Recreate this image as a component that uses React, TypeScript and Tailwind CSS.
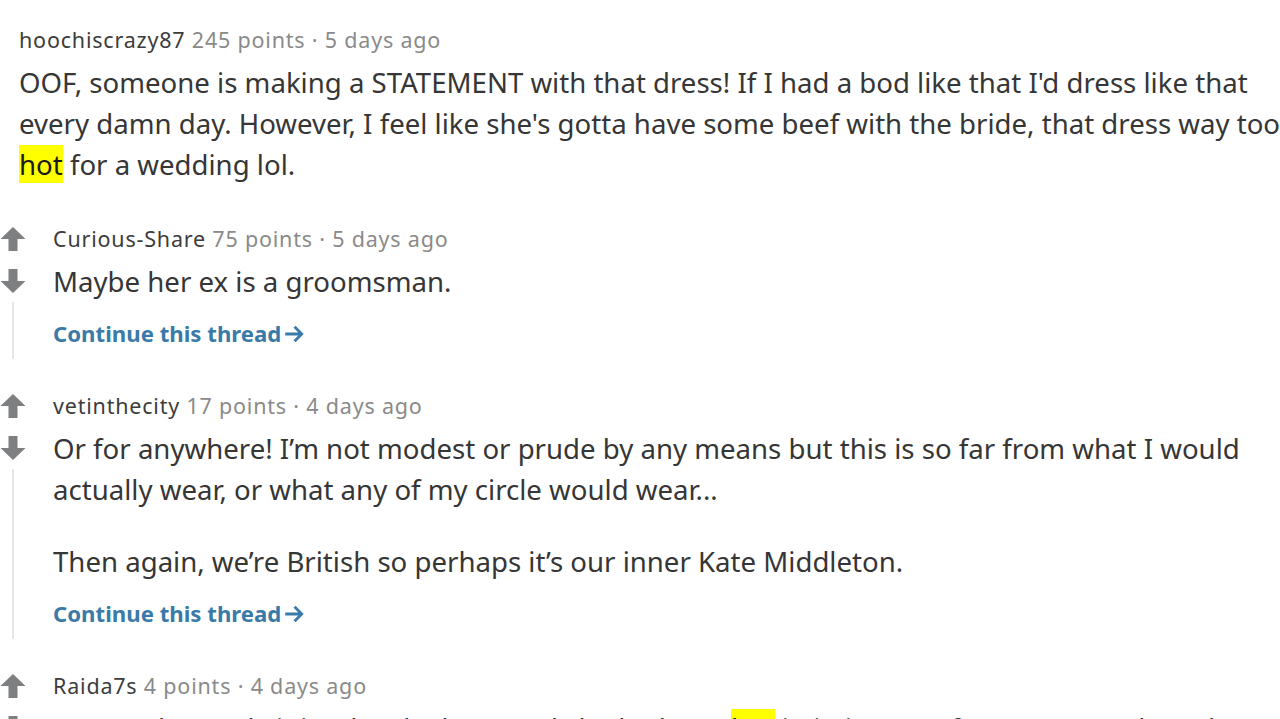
import type { ReactNode } from "react";

type Reply = {
  author: string;
  points: string;
  age: string;
  paragraphs: ReactNode[][];
  more?: boolean;
};

const body = "font-['Noto_Sans','Open_Sans',sans-serif] text-[27.6px] leading-[41px] text-[#363636]";
const meta = "font-['Noto_Sans','Open_Sans',sans-serif] text-[21.5px] leading-[28px] tracking-[0.8px]";

function Hot() {
  return <span className="bg-[#ffff00] text-[#1a1a1a]">hot</span>;
}

function VoteArrow({ down }: { down?: boolean }) {
  return (
    <svg width="26" height="26" viewBox="0 0 26 26" className={down ? "rotate-180" : ""}>
      <path d="M13 1 L25.5 13 L17.5 13 L17.5 25 L8.5 25 L8.5 13 L0.5 13 Z" fill="#7d7f80" />
    </svg>
  );
}

function Meta({ author, points, age }: { author: string; points: string; age: string }) {
  return (
    <div className={`${meta} whitespace-nowrap`}>
      <span className="text-[#3c3c3c]">{author}</span>{" "}
      <span className="text-[#8a8a8a]">
        {points} · {age}
      </span>
    </div>
  );
}

function ContinueLink() {
  return (
    <div className="mt-[17px] flex items-center font-['Noto_Sans',sans-serif] text-[22.2px] font-bold leading-[30px] text-[#3a7aa8]">
      Continue this thread
      <svg width="22" height="22" viewBox="0 0 20 20" className="ml-[2px]">
        <path d="M2 10 H17 M10.5 3.5 L17 10 L10.5 16.5" stroke="#3a7aa8" strokeWidth="2.6" fill="none" />
      </svg>
    </div>
  );
}

function ChildComment({ reply, last }: { reply: Reply; last?: boolean }) {
  return (
    <div className={`flex ${last ? "" : "mb-[33px]"}`}>
      <div className="flex w-[53px] shrink-0 flex-col items-start">
        <div className="mt-[1px]">
          <VoteArrow />
        </div>
        <div className="mt-[16px]">
          <VoteArrow down />
        </div>
        <div className="ml-[12px] mt-[8px] w-[2px] flex-1 bg-[#e6e6e6]" />
      </div>
      <div className="flex flex-col pb-[10px]">
        <Meta author={reply.author} points={reply.points} age={reply.age} />
        <div className={`${body} mt-[8px]`}>
          {reply.paragraphs.map((lines, i) => (
            <div key={i} className={i > 0 ? "mt-[31px]" : ""}>
              {lines.map((line, j) => (
                <div key={j} className="whitespace-nowrap">
                  {line}
                </div>
              ))}
            </div>
          ))}
        </div>
        {reply.more && <ContinueLink />}
      </div>
    </div>
  );
}

const replies: Reply[] = [
  {
    author: "Curious-Share",
    points: "75 points",
    age: "5 days ago",
    paragraphs: [["Maybe her ex is a groomsman."]],
    more: true,
  },
  {
    author: "vetinthecity",
    points: "17 points",
    age: "4 days ago",
    paragraphs: [
      [
        "Or for anywhere! I’m not modest or prude by any means but this is so far from what I would",
        "actually wear, or what any of my circle would wear...",
      ],
      ["Then again, we’re British so perhaps it’s our inner Kate Middleton."],
    ],
    more: true,
  },
  {
    author: "Raida7s",
    points: "4 points",
    age: "4 days ago",
    paragraphs: [
      [
        <>
          I mean, honestly it is a lovely dress and she looks so <Hot /> in it, just not for someone else’s day.
        </>,
      ],
    ],
  },
];

export default function App() {
  return (
    <div className="h-[719px] w-[1280px] overflow-hidden bg-white">
      <div className="pl-[19px] pt-[26px]">
        <Meta author="hoochiscrazy87" points="245 points" age="5 days ago" />
        <div className={`${body} mt-[8px]`}>
          <div className="whitespace-nowrap">
            OOF, someone is making a STATEMENT with that dress! If I had a bod like that I'd dress like that
          </div>
          <div className="whitespace-nowrap">
            every damn day. However, I feel like she's gotta have some beef with the bride, that dress way too
          </div>
          <div className="whitespace-nowrap">
            <Hot /> for a wedding lol.
          </div>
        </div>
      </div>
      <div className="mt-[40px] flex flex-col">
        {replies.map((r, i) => (
          <ChildComment key={r.author} reply={r} last={i === replies.length - 1} />
        ))}
      </div>
    </div>
  );
}
